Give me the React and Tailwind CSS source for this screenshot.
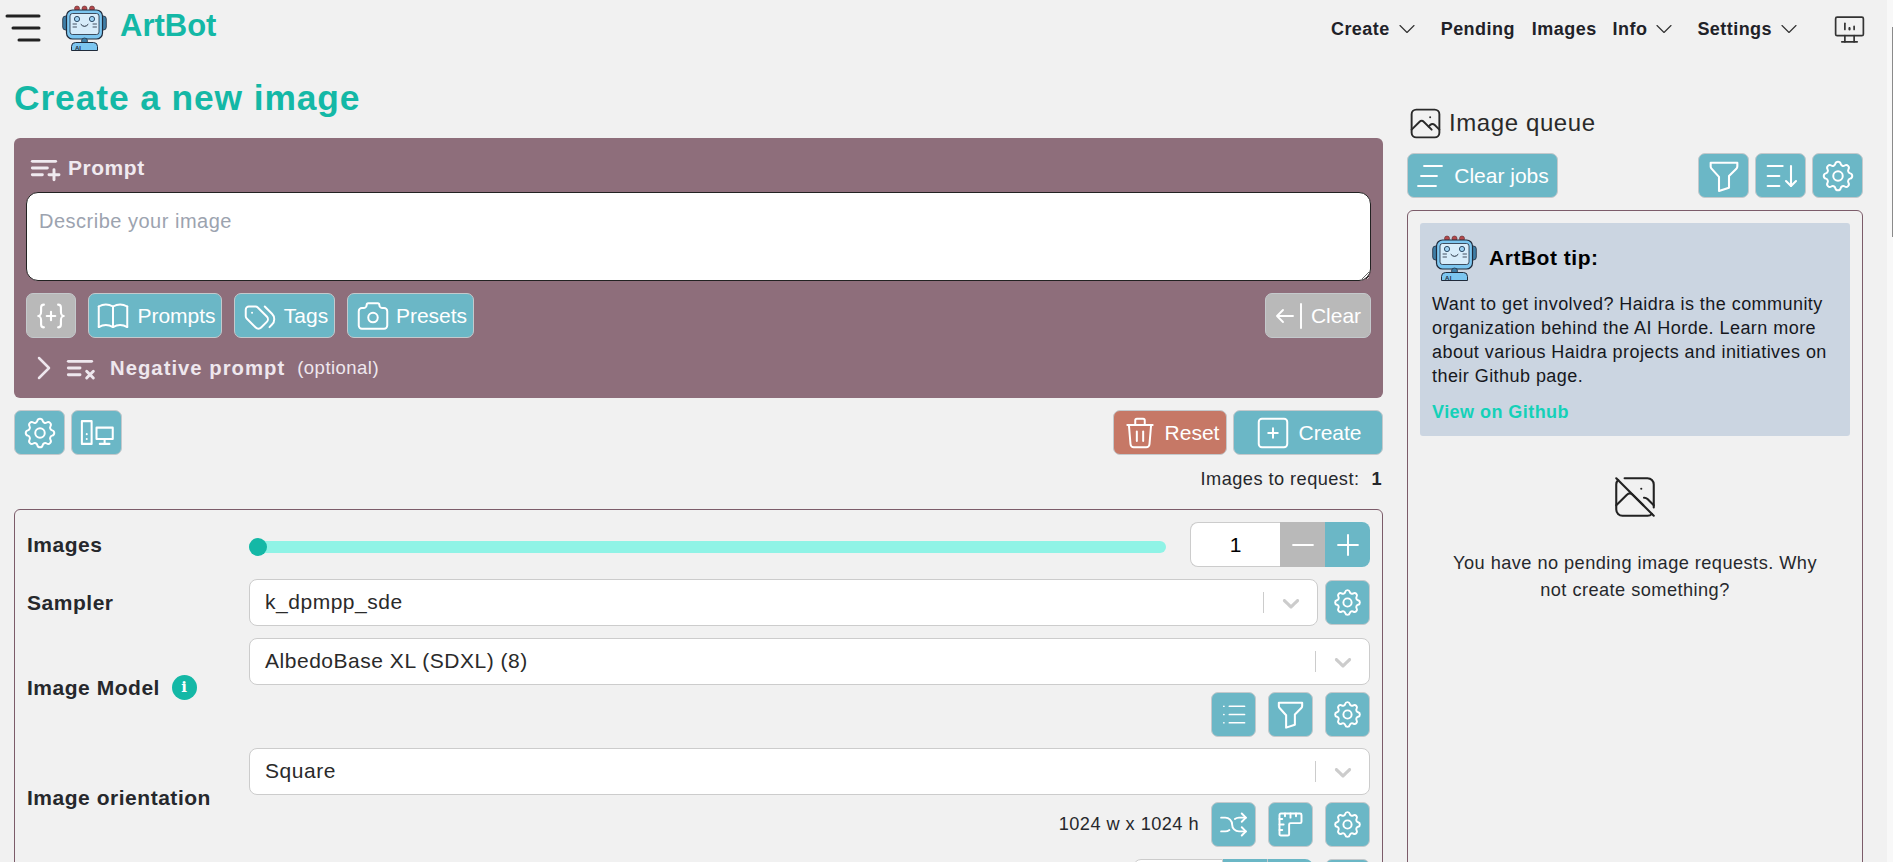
import React from 'react';
import {
  TbMenuDeep, TbDeviceDesktopAnalytics, TbPlaylistAdd, TbPlaylistX, TbBook, TbTags, TbCamera, TbChevronRight,
  TbChevronDown, TbSettings, TbDevicesPc, TbTrash, TbSquarePlus, TbPhoto, TbFilter, TbSortDescending, TbPhotoOff,
  TbMinus, TbPlus, TbList, TbArrowsShuffle, TbRuler,
} from 'react-icons/tb';

const Robot = ({ className }) => (
  <svg viewBox="0 0 45 46" className={className}>
    <circle cx="15" cy="3.5" r="2.5" fill="#b5484a" stroke="#5a2b2f" strokeWidth="0.6" />
    <circle cx="22.5" cy="3.5" r="2.5" fill="#b5484a" stroke="#5a2b2f" strokeWidth="0.6" />
    <circle cx="30" cy="3.5" r="2.5" fill="#b5484a" stroke="#5a2b2f" strokeWidth="0.6" />
    <rect x="0.7" y="11" width="6" height="14" rx="3" fill="#3f7ea6" stroke="#1f2a3a" strokeWidth="0.8" />
    <rect x="38.3" y="11" width="6" height="14" rx="3" fill="#3f7ea6" stroke="#1f2a3a" strokeWidth="0.8" />
    <rect x="4.5" y="5" width="36" height="29" rx="6" fill="#7cc6f0" stroke="#1f2a3a" strokeWidth="1.2" />
    <rect x="8" y="8.5" width="29" height="21" rx="2.5" fill="#d7ecfa" stroke="#1f2a3a" strokeWidth="0.8" />
    <circle cx="15" cy="14" r="2.6" fill="#9fd2f2" stroke="#1f3a55" strokeWidth="0.9" />
    <circle cx="30" cy="14" r="2.6" fill="#9fd2f2" stroke="#1f3a55" strokeWidth="0.9" />
    <path d="M19 19.5q3.5 4 7 0" fill="none" stroke="#1f2a3a" strokeWidth="1" strokeLinecap="round" />
    <path d="M11 19h3.5M11 22h3.5M31 19h3.5M31 22h3.5" stroke="#1f2a3a" strokeWidth="0.8" strokeLinecap="round" />
    <circle cx="22.5" cy="36" r="3" fill="#3f7ea6" stroke="#1f2a3a" strokeWidth="0.7" />
    <path d="M9.5 45.5v-4a4 4 0 0 1 4-4h18a4 4 0 0 1 4 4v4z" fill="#7cc6f0" stroke="#1f2a3a" strokeWidth="1" />
    <text x="13" y="44.5" fontSize="6" fontWeight="700" fill="#1f2a3a" fontFamily="Liberation Sans">AI</text>
  </svg>
);

const BracesPlus = ({ className }) => (
  <svg viewBox="0 0 24 24" fill="none" stroke="currentColor" strokeWidth="1.5" strokeLinecap="round" strokeLinejoin="round" className={className}>
    <path d="M7 4a2 2 0 0 0 -2 2v3a2 3 0 0 1 -2 3a2 3 0 0 1 2 3v3a2 2 0 0 0 2 2" />
    <path d="M17 4a2 2 0 0 1 2 2v3a2 3 0 0 0 2 3a2 3 0 0 0 -2 3v3a2 2 0 0 1 -2 2" />
    <path d="M9 12h6M12 9v6" />
  </svg>
);

const ClearBar = ({ className }) => (
  <svg viewBox="0 0 28 28" fill="none" stroke="currentColor" strokeWidth="1.9" strokeLinecap="round" strokeLinejoin="round" className={className}>
    <path d="M2 14h16M2 14l6 6M2 14l6 -6M26 2v24" />
  </svg>
);

const JobsLines = ({ className }) => (
  <svg viewBox="0 0 28 28" fill="none" stroke="currentColor" strokeWidth="1.8" strokeLinecap="round" className={className}>
    <path d="M8 4h18M5 14h16M2 24h18" />
  </svg>
);

const Btn = ({ children, className = '' }) => (
  <button className={`h-[45px] flex items-center justify-center rounded-[7px] border border-[#c4c9cc] text-white text-[21px] ${className || 'bg-[#6bb7c6]'}`}>
    {children}
  </button>
);

const NavLink = ({ label, chevron, className = '' }) => (
  <div className={`flex items-center text-[18px] font-bold tracking-wide text-[#1f2228] ${className}`}>
    {label}
    {chevron && <TbChevronDown className="ml-[3px] w-[28px] h-[28px] stroke-1 text-[#333]" />}
  </div>
);

const Select = ({ value, className = '' }) => (
  <div className={`h-[47px] flex items-center bg-white border border-[#cccccc] rounded-[8px] pl-[15px] pr-[12px] text-[21px] tracking-wide text-[#2a2a2a] ${className}`}>
    <span className="flex-1 pb-[2px]">{value}</span>
    <span className="w-px h-[21px] bg-[#cccccc]"></span>
    <svg viewBox="0 0 20 20" className="w-[28px] h-[28px] ml-[13px] fill-[#cccccc]">
      <path d="M4.516 7.548c0.436-0.446 1.043-0.481 1.576 0l3.908 3.747 3.908-3.747c0.533-0.481 1.141-0.446 1.574 0 0.436 0.445 0.408 1.197 0 1.615-0.406 0.418-4.695 4.502-4.695 4.502-0.217 0.223-0.502 0.335-0.787 0.335s-0.57-0.112-0.789-0.335c0 0-4.287-4.084-4.695-4.502s-0.436-1.17 0-1.615z" />
    </svg>
  </div>
);

const Label = ({ children }) => (
  <div className="w-[222px] shrink-0 flex items-center text-[21px] font-bold tracking-wide text-[#26282c]">{children}</div>
);

const gearSm = <TbSettings className="w-[33px] h-[33px] stroke-[1.4]" />;
const gearLg = <TbSettings className="w-[38px] h-[38px] stroke-[1.25]" />;

export default function App() {
  return (
    <div className="h-[862px] overflow-hidden flex bg-[#f1f1f1] font-['Liberation_Sans',Arial,sans-serif]">
      <div className="flex-1 min-w-0">
        <header className="h-[56px] flex items-center">
          <TbMenuDeep className="-ml-[1px] w-[48px] h-[48px] stroke-[1.5] text-[#222]" />
          <Robot className="ml-[15px] w-[45px] h-[46px]" />
          <span className="ml-[13px] pb-[4px] text-[31px] font-bold text-[#14b8a6]">ArtBot</span>
          <nav className="ml-auto flex items-center pr-[19px] pt-[2px]">
            <NavLink label="Create" chevron />
            <NavLink label="Pending" className="ml-[20px]" />
            <NavLink label="Images" className="ml-[17px]" />
            <NavLink label="Info" chevron className="ml-[16px]" />
            <NavLink label="Settings" chevron className="ml-[19px]" />
            <TbDeviceDesktopAnalytics className="ml-[28px] w-[37px] h-[37px] stroke-[1.1] text-[#333]" />
          </nav>
        </header>

        <div className="flex pl-[14px] gap-[24px]">
          <main className="w-[1369px] shrink-0">
            <h1 className="mt-[24px] h-[36px] leading-[36px] text-[35.4px] font-bold tracking-wide text-[#14b8a6]">Create a new image</h1>
            <section className="mt-[22px] h-[260px] bg-[#8e6e7b] rounded-[6px] px-[12px] pt-[18px]">
              <div className="h-[24px] flex items-center text-[21px] font-bold tracking-wide text-[#f0eaf0]">
                <TbPlaylistAdd className="-ml-[2px] w-[40px] h-[40px] stroke-[1.75]" />
                <span className="ml-[4px]">Prompt</span>
              </div>
              <textarea
                placeholder="Describe your image"
                className="mt-[12px] block w-full h-[89px] bg-white border border-[#222] rounded-[12px] px-[12px] py-[13px] text-[20px] tracking-wide placeholder:text-[#9ca3af]"
              ></textarea>
              <div className="mt-[12px] flex gap-[12px]">
                <Btn className="w-[50px] bg-[#b9b9b9]"><BracesPlus className="w-[34px] h-[34px]" /></Btn>
                <Btn className="w-[134px] bg-[#6bb7c6]"><TbBook className="w-[38px] h-[38px] stroke-[1.25] mr-[5px]" />Prompts</Btn>
                <Btn className="w-[101px] bg-[#6bb7c6]"><TbTags className="w-[38px] h-[38px] stroke-[1.25] mr-[5px]" />Tags</Btn>
                <Btn className="w-[127px] bg-[#6bb7c6]"><TbCamera className="w-[38px] h-[38px] stroke-[1.25] mr-[4px]" />Presets</Btn>
                <Btn className="ml-auto w-[106px] bg-[#b9b9b9]"><ClearBar className="w-[28px] h-[28px] mr-[8px]" />Clear</Btn>
              </div>
              <div className="mt-[13px] h-[34px] flex items-center text-[#eee7ee]">
                <TbChevronRight className="-ml-[2px] w-[40px] h-[40px] stroke-[1.5]" />
                <TbPlaylistX className="-ml-[4px] w-[40px] h-[40px] stroke-[1.75]" />
                <span className="ml-[10px] text-[20.3px] font-bold tracking-wider">Negative prompt</span>
                <span className="ml-[12px] text-[18.5px] tracking-wide">(optional)</span>
              </div>
            </section>

            <div className="mt-[12px] flex gap-[6px]">
              <Btn className="w-[51px] bg-[#6bb7c6]">{gearLg}</Btn>
              <Btn className="w-[51px] bg-[#6bb7c6]"><TbDevicesPc className="w-[39px] h-[39px] stroke-[1.25]" /></Btn>
              <Btn className="ml-auto w-[114px] bg-[#c67866]"><TbTrash className="w-[38px] h-[38px] stroke-[1.25] mr-[6px]" />Reset</Btn>
              <Btn className="w-[150px] bg-[#6bb7c6]"><TbSquarePlus className="w-[38px] h-[38px] stroke-[1.25] mr-[6px]" />Create</Btn>
            </div>
            <div className="mt-[12px] h-[24px] leading-[24px] flex justify-end text-[18.2px] tracking-wide text-[#26282c] pr-[1px]">
              Images to request:<b className="ml-[12px]">1</b>
            </div>

            <section className="mt-[18px] h-[500px] border border-[#7c5c6a] rounded-[6px] pl-[12px] pr-[12px] pt-[12px] flex flex-col">
              <div className="flex items-center h-[45px]">
                <Label>Images</Label>
                <div className="relative flex-1 h-[12px] mt-[4px] rounded-full bg-[#8ff3e6]">
                  <span className="absolute left-0 -top-[3px] w-[18px] h-[18px] rounded-full bg-[#14b8a6]"></span>
                </div>
                <div className="ml-[24px] w-[180px] h-[45px] flex">
                  <div className="w-[90px] flex items-center justify-center bg-white border border-[#ccc] border-r-0 rounded-l-[8px] text-[21px]">1</div>
                  <div className="w-[45px] flex items-center justify-center bg-[#b9b9b9] text-white"><TbMinus className="w-[34px] h-[34px] stroke-[1.4]" /></div>
                  <div className="w-[45px] flex items-center justify-center bg-[#6bb7c6] rounded-r-[8px] text-white"><TbPlus className="w-[34px] h-[34px] stroke-[1.4]" /></div>
                </div>
              </div>

              <div className="mt-[12px] flex items-center">
                <Label>Sampler</Label>
                <Select value="k_dpmpp_sde" className="flex-1" />
                <Btn className="ml-[7px] w-[45px] bg-[#6bb7c6]">{gearSm}</Btn>
              </div>

              <div className="mt-[12px] flex">
                <Label>Image Model<span className="ml-[12px] w-[25px] h-[25px] rounded-full bg-[#14b8a6] text-white text-[15px] font-bold flex items-center justify-center font-['DejaVu_Serif',serif]">i</span></Label>
                <div className="flex-1">
                  <Select value="AlbedoBase XL (SDXL) (8)" />
                  <div className="mt-[7px] flex justify-end gap-[12px]">
                    <Btn className="w-[45px] bg-[#6bb7c6]"><TbList className="w-[33px] h-[33px] stroke-[1.25]" /></Btn>
                    <Btn className="w-[45px] bg-[#6bb7c6]"><TbFilter className="w-[35px] h-[35px] stroke-[1.4]" /></Btn>
                    <Btn className="w-[45px] bg-[#6bb7c6]">{gearSm}</Btn>
                  </div>
                </div>
              </div>

              <div className="mt-[11px] flex">
                <Label>Image orientation</Label>
                <div className="flex-1">
                  <Select value="Square" />
                  <div className="mt-[7px] flex items-center justify-end gap-[12px]">
                    <span className="text-[18.2px] tracking-wide text-[#26282c]">1024 w x 1024 h</span>
                    <Btn className="w-[45px] bg-[#6bb7c6]"><TbArrowsShuffle className="w-[33px] h-[33px] stroke-[1.4]" /></Btn>
                    <Btn className="w-[45px] bg-[#6bb7c6]"><TbRuler className="w-[33px] h-[33px] stroke-[1.4]" /></Btn>
                    <Btn className="w-[45px] bg-[#6bb7c6]">{gearSm}</Btn>
                  </div>
                </div>
              </div>

              <div className="mt-[12px] flex justify-end gap-[12px]">
                <div className="flex h-[45px]">
                  <div className="w-[90px] bg-white border border-[#ccc] rounded-l-[8px]"></div>
                  <div className="w-[45px] bg-[#6bb7c6] border-r border-[#c4c9cc]"></div>
                  <div className="w-[45px] bg-[#6bb7c6] rounded-r-[8px]"></div>
                </div>
                <Btn className="w-[45px] bg-[#6bb7c6]"></Btn>
              </div>
            </section>
          </main>

          <aside className="w-[456px] shrink-0">
            <div className="mt-[50px] h-[34px] flex items-center text-[24px] tracking-wide text-[#2a2a2a]">
              <TbPhoto className="w-[37px] h-[37px] stroke-[1.25]" />
              <span className="ml-[5px]">Image queue</span>
            </div>
            <div className="mt-[13px] flex gap-[6px]">
              <Btn className="w-[151px] bg-[#6bb7c6]"><JobsLines className="w-[28px] h-[28px] mr-[10px]" />Clear jobs</Btn>
              <Btn className="ml-auto w-[51px] bg-[#6bb7c6]"><TbFilter className="w-[40px] h-[40px] stroke-[1.25]" /></Btn>
              <Btn className="w-[51px] bg-[#6bb7c6]"><TbSortDescending className="w-[40px] h-[40px] stroke-[1.25]" /></Btn>
              <Btn className="w-[51px] bg-[#6bb7c6]">{gearLg}</Btn>
            </div>
            <div className="mt-[12px] h-[700px] border border-[#7c5c6a] rounded-[6px] px-[12px] pt-[12px]">
              <div className="h-[213px] bg-[#cbd5e1] rounded-[3px] px-[12px] pt-[12px] text-[18px] tracking-wide text-[#16181d]">
                <div className="flex items-center">
                  <Robot className="w-[45px] h-[46px]" />
                  <b className="ml-[12px] text-[21px] tracking-wide text-black">ArtBot tip:</b>
                </div>
                <p className="mt-[11px] leading-[24px]">
                  Want to get involved? Haidra is the community organization behind the AI Horde. Learn more about various Haidra projects and initiatives on their Github page.
                </p>
                <div className="mt-[11px] font-bold text-[#14d1b8]">View on Github</div>
              </div>
              <TbPhotoOff className="mt-[36px] mx-auto w-[50px] h-[50px] stroke-[1] text-[#222]" />
              <p className="mt-[28px] mx-auto w-[372px] text-center text-[18.2px] leading-[27px] tracking-wide text-[#26282c]">
                You have no pending image requests. Why not create something?
              </p>
            </div>
          </aside>
        </div>
      </div>
      <div className="w-[6px] shrink-0 bg-[#f8f8f8] pt-[27px] flex justify-end">
        <div className="w-px h-[210px] bg-[#8a8a8a]"></div>
      </div>
    </div>
  );
}
